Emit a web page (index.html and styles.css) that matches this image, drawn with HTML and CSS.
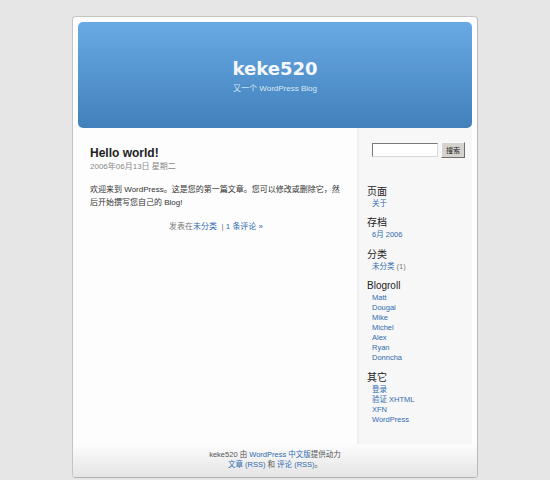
FILE: index.html
```html
<!DOCTYPE html>
<html lang="zh-CN">
<head>
<meta charset="utf-8">
<title>keke520</title>
<link rel="stylesheet" href="styles.css">
</head>
<body>
<div class="page">
  <header class="header">
    <h1 class="title">keke520</h1>
    <div class="desc">又一个 WordPress Blog</div>
  </header>
  <div class="content">
    <main class="main">
      <article class="post">
        <h2 class="post-title">Hello world!</h2>
        <div class="post-date">2006年06月13日 星期二</div>
        <p class="entry">欢迎来到 WordPress。这是您的第一篇文章。您可以修改或删除它，然后开始撰写您自己的 Blog!</p>
        <p class="meta">发表在<a href="#">未分类</a> &nbsp;| <a href="#">1 条评论 &raquo;</a></p>
      </article>
    </main>
    <aside class="sidebar">
      <form class="search">
        <input class="search-input" type="text">
        <button class="search-btn" type="button">搜索</button>
      </form>
      <section class="widget">
        <h2 class="widget-title">页面</h2>
        <ul class="links"><li><a href="#">关于</a></li></ul>
      </section>
      <section class="widget">
        <h2 class="widget-title">存档</h2>
        <ul class="links"><li><a href="#">6月 2006</a></li></ul>
      </section>
      <section class="widget">
        <h2 class="widget-title">分类</h2>
        <ul class="links"><li><a href="#">未分类</a> (1)</li></ul>
      </section>
      <section class="widget">
        <h2 class="widget-title">Blogroll</h2>
        <ul class="links">
          <li><a href="#">Matt</a></li>
          <li><a href="#">Dougal</a></li>
          <li><a href="#">Mike</a></li>
          <li><a href="#">Michel</a></li>
          <li><a href="#">Alex</a></li>
          <li><a href="#">Ryan</a></li>
          <li><a href="#">Donncha</a></li>
        </ul>
      </section>
      <section class="widget">
        <h2 class="widget-title">其它</h2>
        <ul class="links">
          <li><a href="#">登录</a></li>
          <li><a href="#">验证 XHTML</a></li>
          <li><a href="#">XFN</a></li>
          <li><a href="#">WordPress</a></li>
        </ul>
      </section>
    </aside>
  </div>
  <footer class="footer">
    <p class="foot-line">keke520 由 <a href="#">WordPress 中文版</a>提供动力</p>
    <p class="foot-line"><a href="#">文章 (RSS)</a> 和 <a href="#">评论 (RSS)</a>。</p>
  </footer>
</div>
</body>
</html>
```

FILE: styles.css
```css
html, body {
  margin: 0;
  padding: 0;
}
body {
  background: #e6e6e6;
  color: #333;
  font-family: "Liberation Sans", "Noto Sans CJK SC", sans-serif;
}
a {
  color: #2f6cb0;
  text-decoration: none;
}
.page {
  width: 394px;
  margin: 16px auto 0;
  padding: 5px 5px 0;
  border: 1px solid #c4c4c4;
  border-right-color: #b8b8b8;
  border-bottom-color: #b0b0b0;
  border-radius: 4px;
  background: #fdfdfd;
}
.header {
  height: 106px;
  box-sizing: border-box;
  padding-top: 38px;
  border-radius: 5px;
  background: linear-gradient(#6aaae4, #4180ba);
  text-align: center;
}
.title {
  margin: 0;
  font-family: "DejaVu Sans", sans-serif;
  font-weight: bold;
  font-size: 18px;
  line-height: 18px;
  color: #f4f8fc;
}
.desc {
  margin-top: 6px;
  font-size: 8px;
  line-height: 10px;
  color: #dbe8f4;
}
.content {
  display: flex;
}
.main {
  width: 279px;
  box-sizing: border-box;
  padding: 18px 15px 0 12px;
}
.post-title {
  margin: 0;
  font-size: 12px;
  line-height: 15px;
  font-weight: bold;
  color: #222;
}
.post-date {
  margin-top: 1px;
  font-size: 8px;
  line-height: 10px;
  color: #888;
}
.entry {
  margin: 11px 0 0;
  font-size: 8px;
  line-height: 13px;
  color: #333;
}
.meta {
  margin: 12px 0 0;
  font-size: 8px;
  line-height: 12px;
  color: #777;
  text-align: center;
}
.sidebar {
  width: 115px;
  box-sizing: border-box;
  padding: 14px 0 19px 10px;
  background: linear-gradient(to right, #ececec, #f7f7f7 3px);
}
.search {
  display: flex;
  align-items: center;
  gap: 3px;
  margin: 0 0 27.5px 5px;
}
.search-input {
  width: 66px;
  height: 14px;
  box-sizing: border-box;
  margin: 0;
  padding: 0;
  border: 1px solid;
  border-color: #7b7b7b #d8d8d8 #d8d8d8 #7b7b7b;
  background: #fff;
}
.search-btn {
  width: 24px;
  height: 16px;
  box-sizing: border-box;
  margin: 0;
  padding: 0;
  border: 1px solid;
  border-color: #fafafa #6f6f6f #6f6f6f #fafafa;
  background: #d6d3ce;
  font-family: "Noto Sans CJK SC", sans-serif;
  font-size: 7px;
  line-height: 12px;
  color: #222;
}
.widget-title {
  margin: 8.5px 0 1px;
  font-size: 10px;
  line-height: 12px;
  font-weight: normal;
  color: #222;
}
.links {
  margin: 0;
  padding: 0 0 0 5px;
  list-style: none;
  font-size: 7.5px;
  line-height: 10px;
  color: #777;
}
.footer {
  margin: 0 -5px;
  height: 33px;
  box-sizing: border-box;
  padding-top: 6.5px;
  border-radius: 0 0 3px 3px;
  background: linear-gradient(#fdfdfd, #e4e4e4);
  text-align: center;
}
.foot-line {
  margin: 0;
  font-size: 7.5px;
  line-height: 10px;
  color: #555;
}
```
